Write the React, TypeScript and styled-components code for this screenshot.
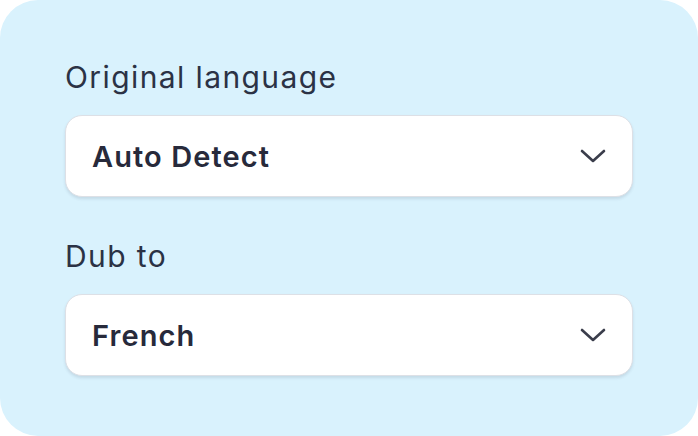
import styled, { createGlobalStyle } from 'styled-components'

const GlobalStyle = createGlobalStyle`
  html, body {
    margin: 0;
    padding: 0;
    background: #ffffff;
  }
  body {
    font-family: Inter, 'Noto Sans', sans-serif;
  }
`

const Card = styled.div`
  width: 698px;
  height: 436px;
  box-sizing: border-box;
  border-radius: 38px;
  background: #d9f2fd;
  padding: 60px 65px 0 65px;
  display: flex;
  flex-direction: column;
  gap: 42px;
`

const Field = styled.div`
  display: flex;
  flex-direction: column;
  gap: 21px;
`

const Label = styled.div`
  font-size: 30px;
  line-height: 34px;
  font-weight: 400;
  letter-spacing: 1.4px;
  color: #2b3245;
`

const Select = styled.div`
  height: 82px;
  box-sizing: border-box;
  width: 568px;
  border: 1.5px solid #dde0e6;
  border-radius: 17px;
  background: #ffffff;
  box-shadow: 0 2px 3px rgba(40, 50, 70, 0.12);
  display: flex;
  align-items: center;
  justify-content: space-between;
  padding: 0 26px;
`

const Value = styled.span`
  font-size: 29px;
  font-weight: 600;
  letter-spacing: 1.1px;
  color: #272a3b;
`

function Chevron() {
  return (
    <svg width="26" height="16" viewBox="0 0 26 16" fill="none">
      <path
        d="M2 3 L13 13 L24 3"
        stroke="#3a3d4b"
        strokeWidth="2.6"
        strokeLinecap="round"
        strokeLinejoin="round"
      />
    </svg>
  )
}

const fields = [
  { id: 0, label: 'Original language', value: 'Auto Detect' },
  { id: 1, label: 'Dub to', value: 'French' },
]

function App() {
  return (
    <>
      <GlobalStyle />
      <Card>
        {fields.map((f) => (
          <Field key={f.id}>
            <Label>{f.label}</Label>
            <Select>
              <Value>{f.value}</Value>
              <Chevron />
            </Select>
          </Field>
        ))}
      </Card>
    </>
  )
}

export default App
